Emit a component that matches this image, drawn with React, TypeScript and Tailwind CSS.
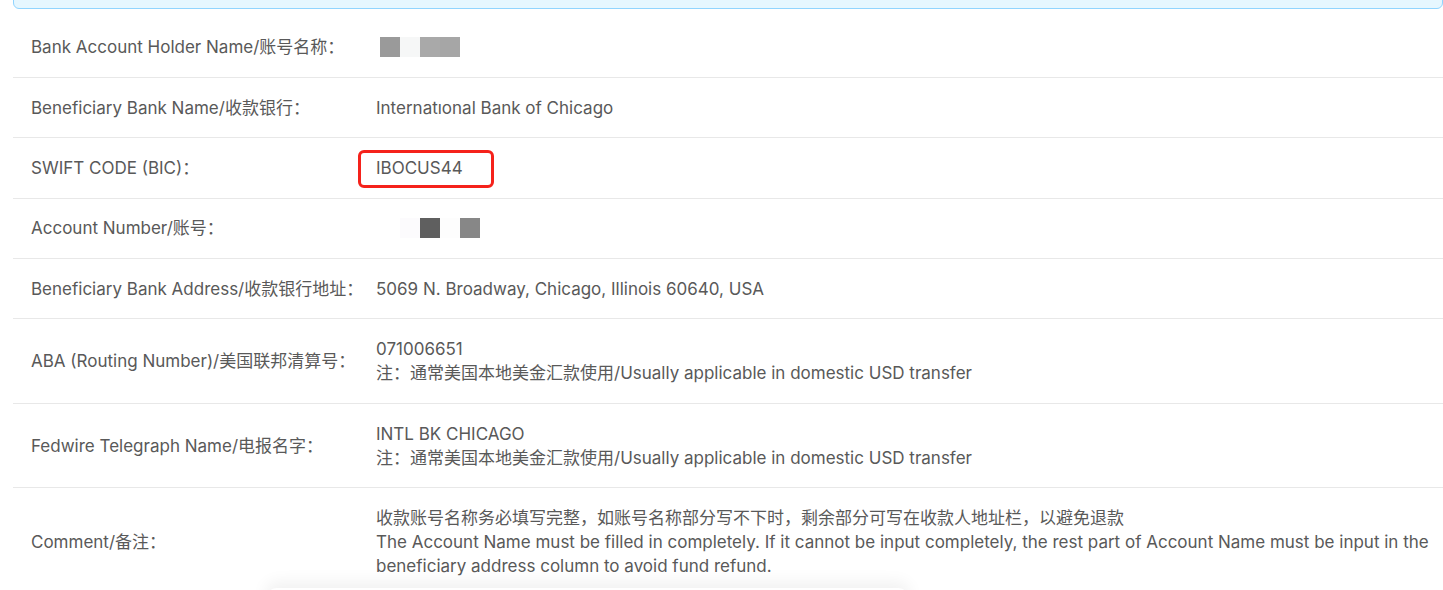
import type { ReactNode } from 'react';

type Row = { label: string; value: ReactNode };

const font = { fontFamily: 'Inter, "Noto Sans CJK SC", sans-serif' };

function Blocks({ cells }: { cells: string[] }) {
    return (
        <div className="flex h-5">
            {cells.map((c, i) => (
                <div key={i} className={`w-5 h-5 ${c}`} />
            ))}
        </div>
    );
}

export default function App() {
    const note = '注：通常美国本地美金汇款使用/Usually applicable in domestic USD transfer';

    const rows: Row[] = [
        {
            label: 'Bank Account Holder Name/账号名称：',
            value: (
                <div className="pl-1">
                    <Blocks cells={['bg-[#9a9a9a]', 'bg-[#f6f7f7]', 'bg-[#a9a9a9]', 'bg-[#a6a6a6]']} />
                </div>
            ),
        },
        { label: 'Beneficiary Bank Name/收款银行：', value: 'Internatıonal Bank of Chicago' },
        {
            label: 'SWIFT CODE (BIC)：',
            value: (
                <div className="relative inline-block">
                    IBOCUS44
                    <div className="absolute -left-[18px] -right-[31px] -top-[6px] -bottom-[8px] border-[3px] border-[#f5221b] rounded-md" />
                </div>
            ),
        },
        {
            label: 'Account Number/账号：',
            value: (
                <div className="pl-6">
                    <Blocks cells={['bg-[#fcfbfd]', 'bg-[#5f5f5f]', 'bg-[#fdfdfd]', 'bg-[#878787]']} />
                </div>
            ),
        },
        { label: 'Beneficiary Bank Address/收款银行地址：', value: '5069 N. Broadway, Chicago, Illinois 60640, USA' },
        {
            label: 'ABA (Routing Number)/美国联邦清算号：',
            value: (
                <>
                    <div>071006651</div>
                    <div>{note}</div>
                </>
            ),
        },
        {
            label: 'Fedwire Telegraph Name/电报名字：',
            value: (
                <>
                    <div>INTL BK CHICAGO</div>
                    <div>{note}</div>
                </>
            ),
        },
        {
            label: 'Comment/备注：',
            value: (
                <>
                    <div>收款账号名称务必填写完整，如账号名称部分写不下时，剩余部分可写在收款人地址栏，以避免退款</div>
                    <div>
                        The Account Name must be filled in completely. If it cannot be input completely, the rest part of Account Name must be input in the beneficiary address column to avoid fund refund.
                    </div>
                </>
            ),
        },
    ];

    return (
        <div className="relative w-[1443px] h-[590px] overflow-hidden bg-white text-[17px] text-[#595959]" style={font}>
            {/* Info banner */}
            <div className="ml-[13px] -mt-[10px] h-[19px] bg-[#e6f7ff] border border-[#91d5ff] rounded-md" />

            {/* Details table */}
            <div className="ml-[13px] mt-[8.6px]">
                {rows.map((row, i) => (
                    <div key={i} className="flex items-center border-b border-[#e8e8e8]">
                        <div className="w-[363px] shrink-0 pl-[18px] pr-1 py-[17.7px] leading-6 whitespace-nowrap">{row.label}</div>
                        <div className="flex-1 pr-[8px] py-[17.7px] leading-6">{row.value}</div>
                    </div>
                ))}
            </div>

            {/* Shadow of the panel below */}
            <div className="absolute left-[265px] top-[588px] w-[645px] h-6 rounded-full bg-white shadow-[0_-6px_16px_rgba(0,0,0,0.06)]" />
        </div>
    );
}
